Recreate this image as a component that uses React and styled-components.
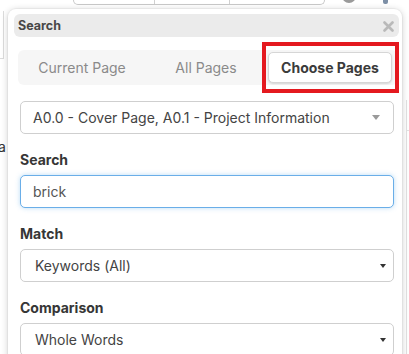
import React from 'react';
import styled, { createGlobalStyle } from 'styled-components';

const Global = createGlobalStyle`
  html, body { margin: 0; padding: 0; background: #fff; }
  body { font-family: Inter, "Noto Sans", Arial, sans-serif; overflow: hidden; }
  * { box-sizing: border-box; }
`;

const Page = styled.div`
  position: relative;
  width: 409px;
  height: 354px;
  overflow: hidden;
  background: #fff;
`;

/* ---------- background page (mostly hidden) ---------- */
const Toolbar = styled.div`
  display: flex;
  align-items: flex-start;
  height: 10px;
  padding-left: 73px;
`;
const ButtonGroup = styled.div`
  display: flex;
  width: 252px;
  height: 5px;
  border: 1px solid #c9c9c9;
  border-top: none;
  border-radius: 0 0 5px 5px;
`;
const GroupButton = styled.div`
  width: ${p => p.$w}px;
  border-left: ${p => (p.$first ? 'none' : '1px solid #d0d0d0')};
`;
const Avatar = styled.div`
  width: 14px;
  height: 14px;
  margin: -11px 0 0 17px;
  border-radius: 50%;
  background: #9a9a9a;
`;
const Dot = styled.div`
  width: 5px;
  height: 4px;
  margin: 0 0 0 27px;
  border-radius: 0 0 2px 2px;
  background: #7d8fa6;
`;
const Workspace = styled.div`
  display: grid;
  grid-template-columns: 8px 1fr 7px;
  height: 344px;
`;
const LeftPane = styled.div`
  display: flex;
  flex-direction: column;
  border-top: 1px solid transparent;
`;
const Rail = styled.div`
  width: 4px;
  height: 48px;
  border-right: 1px solid #dcdcdc;
  border-bottom: 1px solid #dcdcdc;
`;
const CutText = styled.div`
  margin-top: 80px;
  font-size: 14px;
  line-height: 16px;
  color: #333;
  text-indent: -2px;
`;
const RightPane = styled.div`
  margin-top: 90px;
  margin-left: 4px;
  border-left: 1px solid #e2e2e2;
`;
const RightRule = styled.div`
  margin-top: 30px;
  border-top: 1px solid #e2e2e2;
`;

/* ---------- popover ---------- */
const Popover = styled.div`
  position: absolute;
  left: 8px;
  top: 9px;
  width: 394px;
  height: 370px;
  padding: 5px 3px 0 6px;
  background: #fff;
  border-radius: 8px;
  box-shadow: 0 1px 7px rgba(0, 0, 0, 0.2), 0 0 0 1px rgba(0, 0, 0, 0.03);
`;
const Header = styled.div`
  display: flex;
  align-items: center;
  justify-content: space-between;
  height: 23px;
  padding: 0 5px 0 4px;
  background: #ebebeb;
  border-radius: 6px;
`;
const Title = styled.span`
  font-size: 12.5px;
  font-weight: 700;
  color: #474747;
`;
const Close = styled.svg`
  width: 11px;
  height: 11px;
  margin-top: 2px;
`;
const Body = styled.div`
  padding: 13px 1px 0 4px;
`;
const Tabs = styled.div`
  position: relative;
  display: grid;
  grid-template-columns: repeat(3, 1fr);
  padding: 2px 6px 2px 2px;
  background: #f6f6f6;
  border-radius: 6px;
`;
const Tab = styled.div`
  display: flex;
  align-items: center;
  justify-content: center;
  height: 31px;
  font-size: 14px;
  font-weight: ${p => (p.$active ? 700 : 400)};
  color: ${p => (p.$active ? '#3b3b3b' : '#8a8a8a')};
  background: ${p => (p.$active ? '#fff' : 'transparent')};
  border: 1px solid ${p => (p.$active ? '#d6d6d6' : 'transparent')};
  border-radius: 5px;
  box-shadow: ${p => (p.$active ? '0 1px 2px rgba(0,0,0,0.14)' : 'none')};
`;
const Highlight = styled.div`
  position: absolute;
  top: -8px;
  bottom: -8px;
  left: 244px;
  right: -1px;
  border: 4px solid #e4191f;
  pointer-events: none;
`;
const Form = styled.div`
  display: flex;
  flex-direction: column;
  padding: 16px 4px 0 2px;
`;
const Field = styled.div`
  display: flex;
  flex-direction: column;
  margin-top: 16px;
`;
const Label = styled.label`
  font-size: 14px;
  font-weight: 700;
  line-height: 20px;
  color: #363636;
  margin-bottom: 5px;
`;
const SelectBox = styled.div`
  display: flex;
  align-items: center;
  justify-content: space-between;
  height: 33px;
  padding: ${p => (p.$native ? '0 7px 0 14px' : '0 13px 0 12px')};
  border: 1px solid #cfcfcf;
  border-radius: 5px;
  font-size: 14px;
  color: #444;
  white-space: nowrap;
`;
const Caret = styled.span`
  width: 0;
  height: 0;
  border-left: ${p => (p.$native ? 3.5 : 4.5)}px solid transparent;
  border-right: ${p => (p.$native ? 3.5 : 4.5)}px solid transparent;
  border-top: ${p => (p.$native ? 4 : 5)}px solid ${p => (p.$native ? '#333' : '#9a9a9a')};
`;
const Input = styled.input`
  height: 33px;
  padding: 0 12px;
  border: 1px solid #6aaee8;
  border-radius: 5px;
  box-shadow: 0 0 5px rgba(102, 175, 233, 0.45);
  font-family: Inter, "Noto Sans", Arial, sans-serif;
  font-size: 14px;
  color: #555;
  outline: none;
  background: #fff;
`;

function Select({ value, native }) {
  return (
    <SelectBox $native={native}>
      <span>{value}</span>
      <Caret $native={native} />
    </SelectBox>
  );
}

export default function App() {
  return (
    <Page>
      <Global />
      <Toolbar>
        <ButtonGroup>
          <GroupButton $w={81} $first />
          <GroupButton $w={75} />
          <GroupButton $w={96} />
        </ButtonGroup>
        <Avatar />
        <Dot />
      </Toolbar>
      <Workspace>
        <LeftPane>
          <Rail />
          <CutText>a</CutText>
        </LeftPane>
        <div />
        <RightPane>
          <RightRule />
        </RightPane>
      </Workspace>

      <Popover>
        <Header>
          <Title>Search</Title>
          <Close viewBox="0 0 11 11">
            <path d="M1.5 1.5 L9.5 9.5 M9.5 1.5 L1.5 9.5" stroke="#b9b9b9" strokeWidth="2.6" strokeLinecap="round" />
          </Close>
        </Header>
        <Body>
          <Tabs>
            <Tab>Current Page</Tab>
            <Tab>All Pages</Tab>
            <Tab $active>Choose Pages</Tab>
            <Highlight />
          </Tabs>
          <Form>
            <Select value="A0.0 - Cover Page, A0.1 - Project Information" />
            <Field>
              <Label>Search</Label>
              <Input defaultValue="brick" readOnly />
            </Field>
            <Field>
              <Label>Match</Label>
              <Select value="Keywords (All)" native />
            </Field>
            <Field>
              <Label>Comparison</Label>
              <Select value="Whole Words" native />
            </Field>
          </Form>
        </Body>
      </Popover>
    </Page>
  );
}
